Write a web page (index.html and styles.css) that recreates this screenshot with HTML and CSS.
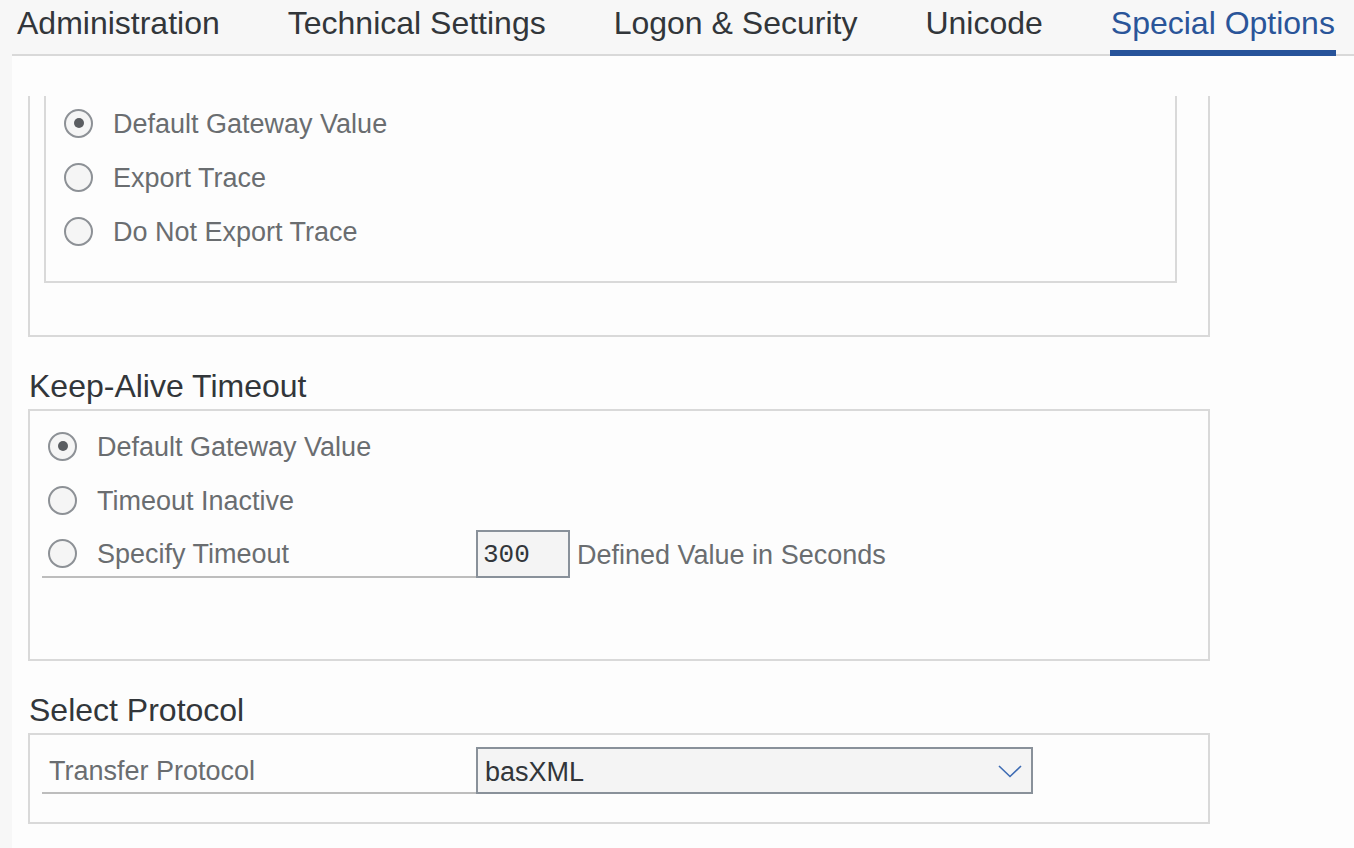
FILE: index.html
```html
<!DOCTYPE html>
<html lang="en">
<head>
<meta charset="utf-8">
<title>Special Options</title>
<link rel="stylesheet" href="styles.css">
</head>
<body>
<nav class="tabs">
  <div class="tab">Administration</div>
  <div class="tab">Technical Settings</div>
  <div class="tab">Logon &amp; Security</div>
  <div class="tab">Unicode</div>
  <div class="tab active">Special Options</div>
</nav>
<main class="pane">
  <div class="viewport">
    <section class="group cut">
      <div class="inner cut">
        <div class="row"><span class="radio checked"></span><span class="label">Default Gateway Value</span></div>
        <div class="row"><span class="radio"></span><span class="label">Export Trace</span></div>
        <div class="row"><span class="radio"></span><span class="label">Do Not Export Trace</span></div>
      </div>
    </section>

    <h2 class="title">Keep-Alive Timeout</h2>
    <section class="group keep">
      <div class="row"><span class="radio checked"></span><span class="label">Default Gateway Value</span></div>
      <div class="row"><span class="radio"></span><span class="label">Timeout Inactive</span></div>
      <div class="row field">
        <div class="field-label"><span class="radio"></span><span class="label">Specify Timeout</span></div>
        <div class="input">300</div>
        <span class="suffix">Defined Value in Seconds</span>
      </div>
    </section>

    <h2 class="title">Select Protocol</h2>
    <section class="group proto">
      <div class="row field tall">
        <div class="field-label text">Transfer Protocol</div>
        <div class="select">
          <span class="value">basXML</span>
          <svg class="chev" width="24" height="13" viewBox="0 0 24 13"><polyline points="1,1 12,11.5 23,1" fill="none" stroke="#3d6bb3" stroke-width="1.6"/></svg>
        </div>
      </div>
    </section>
  </div>
</main>
</body>
</html>
```

FILE: styles.css
```css
html, body {
  margin: 0;
  padding: 0;
}
body {
  background: #f7f7f7;
  font-family: "Liberation Sans", Arial, sans-serif;
  color: #32363a;
  height: 848px;
  overflow: hidden;
}
.tabs {
  display: flex;
  gap: 66px;
  margin-left: 12px;
  padding-left: 4px;
  height: 54px;
  border-bottom: 2px solid #d9d9d9;
}
.tab {
  box-sizing: border-box;
  height: 56px;
  margin-bottom: -2px;
  padding: 5px 1px 0;
  font-size: 32px;
  line-height: 36px;
  color: #32363a;
  border-bottom: 6px solid transparent;
  white-space: nowrap;
}
.tab.active {
  color: #2a5599;
  border-bottom-color: #27539a;
}
.pane {
  margin-left: 12px;
  background: #fdfdfd;
  height: 792px;
  padding-top: 40px;
  box-sizing: border-box;
  overflow: hidden;
}
.viewport {
  height: 752px;
  overflow: hidden;
}
.group {
  margin-left: 16px;
  width: 1178px;
  border: 2px solid #d9d9d9;
}
.group.cut {
  border-top: none;
  padding: 0 31px 52px 14px;
  width: 1133px;
}
.inner {
  border: 2px solid #d9d9d9;
  padding: 3px 0 26px;
}
.inner.cut {
  border-top: none;
}
.row {
  display: flex;
  align-items: center;
  height: 48px;
  padding-left: 6px;
  margin-left: 12px;
}
.row + .row {
  margin-top: 6px;
}
.radio {
  box-sizing: border-box;
  width: 29px;
  height: 29px;
  border-radius: 50%;
  border: 2px solid #8d9196;
  background: #f5f5f5;
  display: flex;
  align-items: center;
  justify-content: center;
  flex: none;
}
.radio.checked::before {
  content: "";
  width: 10px;
  height: 10px;
  border-radius: 50%;
  background: #5a5d61;
}
.label {
  margin-left: 20px;
  padding-top: 3px;
  font-size: 27px;
  color: #6a6d70;
  white-space: nowrap;
}
.title {
  margin: 31px 0 4px 17px;
  font-size: 32px;
  line-height: 37px;
  font-weight: normal;
  color: #32363a;
}
.keep {
  padding: 11px 0 81px;
}
.row.field {
  padding-left: 0;
}
.field-label {
  box-sizing: border-box;
  width: 434px;
  height: 48px;
  padding-left: 6px;
  display: flex;
  align-items: center;
  border-bottom: 2px solid #bdbdbd;
}
.input {
  box-sizing: border-box;
  width: 94px;
  height: 48px;
  border: 2px solid #89919a;
  background: #f4f4f4;
  font-family: "Liberation Mono", "Courier New", monospace;
  font-size: 26px;
  line-height: 46px;
  padding-left: 5px;
  color: #32363a;
}
.suffix {
  margin-left: 7px;
  padding-top: 3px;
  font-size: 27px;
  color: #6a6d70;
  white-space: nowrap;
}
.proto {
  padding: 12px 0 28px;
}
.row.tall,
.row.tall .field-label {
  height: 47px;
}
.field-label.text {
  padding-left: 7px;
  padding-top: 3px;
  font-size: 27px;
  color: #6a6d70;
}
.select {
  box-sizing: border-box;
  width: 557px;
  height: 47px;
  border: 2px solid #89919a;
  background: #f4f4f4;
  display: flex;
  align-items: center;
  justify-content: space-between;
  padding: 0 9px 0 7px;
}
.select .value {
  padding-top: 3px;
  font-size: 27px;
  color: #32363a;
}
.chev {
  display: block;
  margin-top: 2px;
}
```
